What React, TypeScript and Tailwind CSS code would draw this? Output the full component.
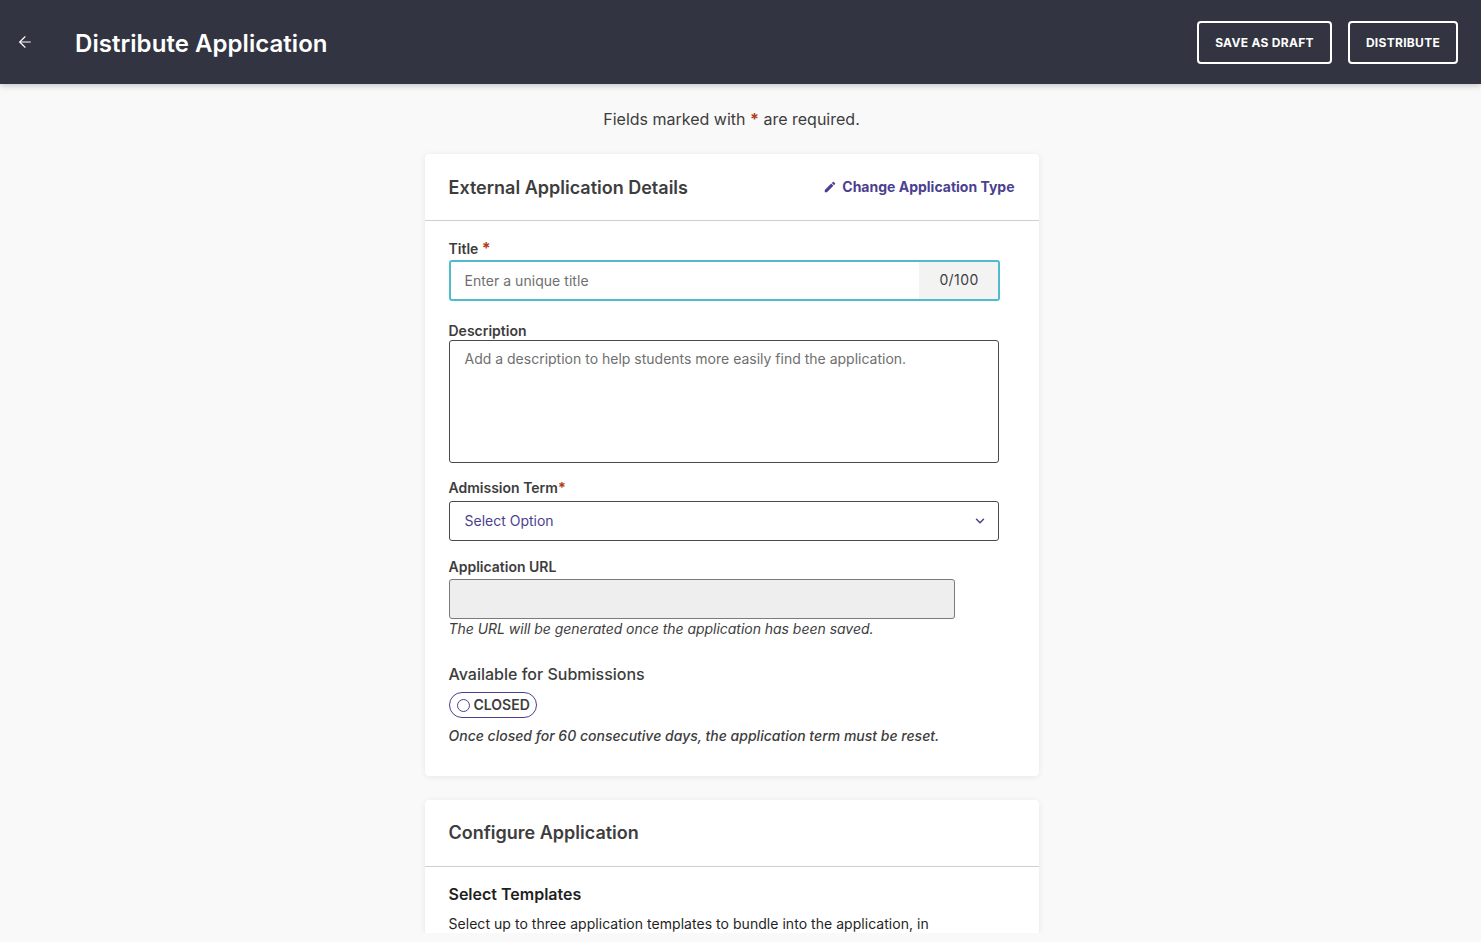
import React from "react";
import { ArrowLeft, ChevronDown } from "lucide-react";
import { MdEdit } from "react-icons/md";

function Required({ className = "" }: { className?: string }) {
  return <span className={`font-bold text-[#b23a12] ${className}`}>*</span>;
}

function FieldLabel({ children }: { children: React.ReactNode }) {
  return <div className="text-sm leading-[17px] font-semibold text-[#3d3d3d]">{children}</div>;
}

export default function App() {
  return (
    <div className="flex h-[942px] flex-col overflow-hidden bg-[#f9f9f9] font-['Inter',sans-serif] text-[#3d3d3d]">
      <header className="z-10 flex h-[84px] shrink-0 items-center justify-between bg-[#323441] pr-[23px] pl-4 shadow-[0_2px_6px_rgba(0,0,0,0.2)]">
        <div className="flex items-center">
          <ArrowLeft className="h-[18px] w-[18px] text-white" strokeWidth={1.5} />
          <h1 className="mt-1 ml-[41px] text-2xl font-semibold tracking-[0.05px] text-white">Distribute Application</h1>
        </div>
        <div className="flex gap-4">
          <button className="h-[43px] w-[135px] rounded border-2 border-white pt-px text-xs font-bold tracking-[0.3px] text-white">
            SAVE AS DRAFT
          </button>
          <button className="h-[43px] w-[110px] rounded border-2 border-white pt-px text-xs font-bold tracking-[0.3px] text-white">
            DISTRIBUTE
          </button>
        </div>
      </header>

      <main className="h-[849px] shrink-0 overflow-hidden pr-[18px]">
        <p className="mt-6 text-center text-base leading-[22px]">
          Fields marked with <Required /> are required.
        </p>

        <section className="mx-auto mt-6 w-[614px] rounded bg-white pb-8 shadow-[0_1px_6px_rgba(0,0,0,0.08)]">
          <div className="flex h-[67px] items-center justify-between border-b border-[#cfcfcf] px-6">
            <h2 className="mt-0.5 text-lg font-semibold">External Application Details</h2>
            <a className="-mt-px flex items-center gap-[5px] text-sm font-bold text-[#4b3f8f]">
              <MdEdit className="h-[14px] w-[14px]" />
              Change Application Type
            </a>
          </div>

          <div className="px-6 pt-[15px]">
            <FieldLabel>
              Title <Required className="text-base" />
            </FieldLabel>
            <div className="flex h-[41px] w-[551px] overflow-hidden rounded-[3px] border-2 border-[#4fbccb]">
              <div className="flex flex-1 items-center pl-[14px] text-sm tracking-[0.04px] text-[#6f6f6f]">Enter a unique title</div>
              <div className="flex w-[79px] items-center justify-center bg-[#f3f3f3] pb-0.5 pl-0.5 text-sm tracking-[0.4px]">0/100</div>
            </div>

            <div className="mt-[21px]">
              <FieldLabel>Description</FieldLabel>
            </div>
            <div className="mt-px h-[123px] w-[550px] rounded-[3px] border border-[#4a4a4a] px-[15px] py-2 text-sm text-[#6f6f6f]">
              Add a description to help students more easily find the application.
            </div>

            <div className="mt-[16px]">
              <FieldLabel>
                Admission Term<Required />
              </FieldLabel>
            </div>
            <div className="mt-[5px] flex h-10 w-[550px] items-center justify-between rounded-[3px] border border-[#4a4a4a] pr-[11px] pl-[15px] text-sm text-[#4b3f8f]">
              Select Option
              <ChevronDown className="h-[14px] w-[14px]" strokeWidth={2.5} />
            </div>

            <div className="mt-[17px]">
              <FieldLabel>Application URL</FieldLabel>
            </div>
            <div className="mt-1 h-10 w-[506px] rounded-[3px] border border-[#7a7a7a] bg-[#eeeeee]" />
            <p className="mt-px text-sm leading-[17px] tracking-[-0.03px] italic">The URL will be generated once the application has been saved.</p>

            <div className="mt-7 text-base leading-[19px] font-medium">Available for Submissions</div>
            <div className="mt-2 flex h-[26px] w-[88px] items-center gap-1 rounded-full border border-[#4b3f8f] pl-[7px]">
              <span className="h-[13px] w-[13px] rounded-full border border-[#4b3f8f]" />
              <span className="text-sm font-semibold">CLOSED</span>
            </div>
            <p className="mt-[9px] text-sm leading-[17px] font-medium italic">
              Once closed for 60 consecutive days, the application term must be reset.
            </p>
          </div>
        </section>

        <section className="mx-auto mt-6 w-[614px] rounded bg-white pb-6 shadow-[0_1px_6px_rgba(0,0,0,0.08)]">
          <div className="flex h-[67px] items-center border-b border-[#cfcfcf] px-6">
            <h2 className="text-lg font-semibold">Configure Application</h2>
          </div>
          <div className="px-6 pt-[17px]">
            <h3 className="text-base leading-[20px] font-semibold text-[#1f1f1f]">Select Templates</h3>
            <p className="mt-[10px] text-sm leading-[20px] tracking-[0.04px] text-[#1f1f1f]">
              Select up to three application templates to bundle into the application, in
            </p>
          </div>
        </section>
      </main>
    </div>
  );
}
